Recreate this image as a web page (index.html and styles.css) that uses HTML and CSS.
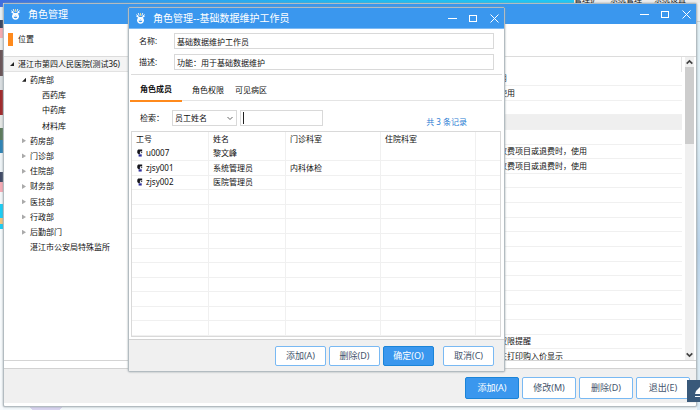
FILE: index.html
```
<!DOCTYPE html>
<html lang="zh-CN">
<head>
    <meta charset="UTF-8">
    <meta name="viewport" content="width=device-width, initial-scale=1.0">
    <title>角色管理</title>
    <link rel="stylesheet" href="styles.css">
</head>
<body>

    <svg class="defs" width="0" height="0" aria-hidden="true">
        <symbol id="logo" viewBox="0 0 20 26">
            <path d="M5 9L1 5M7 8L5 2M13 8L15 2M15 9L19 5" stroke="#fff" stroke-width="2"/>
            <path d="M10 8V2" stroke="#ffe27a" stroke-width="2"/>
            <path d="M1 8L17 19M19 8L3 19" stroke="#fff" stroke-width="3"/>
            <circle cx="10" cy="18" r="6" fill="none" stroke="#fff" stroke-width="3"/>
            <path d="M6 18H14" stroke="#fff" stroke-width="2"/>
        </symbol>
        <symbol id="min" viewBox="0 0 9 9"><path d="M0 4.5H9" stroke="#fff"/></symbol>
        <symbol id="max" viewBox="0 0 9 9"><rect x=".5" y="1.5" width="7" height="6" fill="none" stroke="#fff"/></symbol>
        <symbol id="close" viewBox="0 0 9 9"><path d="M.5 .5L8.5 8.5M8.5 .5L.5 8.5" stroke="#fff"/></symbol>
        <symbol id="user" viewBox="0 0 14 18">
            <path d="M4 1H13V5L8 6V12H5L2 9V4Z" fill="#15151c"/>
            <path d="M8 6H12V12H8Z" fill="#dfe6ee"/>
            <path d="M5 12H12V17H5Z" fill="#30309c"/>
            <path d="M11 6H13V9H11Z" fill="#15151c"/>
        </symbol>
        <symbol id="up" viewBox="0 0 8 8"><path d="M1.5 5.5L4 3L6.5 5.5" fill="none" stroke="#444" stroke-width="1.5"/></symbol>
        <symbol id="down" viewBox="0 0 8 8"><path d="M1.5 2.5L4 5L6.5 2.5" fill="none" stroke="#444" stroke-width="1.5"/></symbol>
        <symbol id="drop" viewBox="0 0 8 8"><path d="M1.5 3L4 5.5L6.5 3" fill="none" stroke="#666" stroke-width="1"/></symbol>
    </svg>

    <div class="top-strip">
        <span>管理护</span><span>系统管理</span><span>系统设置</span>
    </div>

    <div class="window">
        <div class="title-bar">
            <svg class="logo"><use href="#logo"/></svg>
            <span class="title">角色管理</span>
            <button class="ctrl" aria-label="最小化"><svg><use href="#min"/></svg></button>
            <button class="ctrl" aria-label="最大化"><svg><use href="#max"/></svg></button>
            <button class="ctrl" aria-label="关闭"><svg><use href="#close"/></svg></button>
        </div>
        <div class="location">位置</div>

        <div class="main">
            <ul class="tree">
                <li class="open selected">湛江市第四人民医院(测试36)</li>
                <li class="level1 open">药库部</li>
                <li class="level2">西药库</li>
                <li class="level2">中药库</li>
                <li class="level2">材料库</li>
                <li class="level1 closed">药房部</li>
                <li class="level1 closed">门诊部</li>
                <li class="level1 closed">住院部</li>
                <li class="level1 closed">财务部</li>
                <li class="level1 closed">医技部</li>
                <li class="level1 closed">行政部</li>
                <li class="level1 closed">后勤部门</li>
                <li class="level1">湛江市公安局特殊监所</li>
            </ul>
            <div class="list">
                <table class="roles">
                    <tr class="head"><th></th><th></th></tr>
                    <tr><td></td><td>用</td></tr>
                    <tr><td></td><td>使用</td></tr>
                    <tr><td></td><td></td></tr>
                    <tr class="current"><td></td><td></td></tr>
                    <tr><td></td><td></td></tr>
                    <tr><td></td><td>收费项目或退费时，使用</td></tr>
                    <tr><td></td><td>收费项目或退费时，使用</td></tr>
                    <tr><td></td><td></td></tr>
                    <tr><td></td><td></td></tr>
                    <tr><td></td><td></td></tr>
                    <tr><td></td><td></td></tr>
                    <tr><td></td><td></td></tr>
                    <tr><td></td><td></td></tr>
                    <tr><td></td><td></td></tr>
                    <tr><td></td><td></td></tr>
                    <tr><td></td><td></td></tr>
                    <tr><td></td><td></td></tr>
                    <tr><td></td><td></td></tr>
                    <tr><td></td><td>权限提醒</td></tr>
                    <tr><td></td><td>在打印购入价显示</td></tr>
                </table>
            </div>
            <div class="scrollbar">
                <svg><use href="#up"/></svg>
                <div class="thumb"></div>
                <svg><use href="#down"/></svg>
            </div>
        </div>

        <div class="footer">
            <button class="btn primary">添加(A)</button>
            <button class="btn">修改(M)</button>
            <button class="btn">删除(D)</button>
            <button class="btn">退出(E)</button>
        </div>
    </div>

    <div class="dialog" role="dialog" aria-label="角色管理--基础数据维护工作员">
        <div class="title-bar">
            <svg class="logo"><use href="#logo"/></svg>
            <span class="title">角色管理--基础数据维护工作员</span>
            <button class="ctrl" aria-label="最小化"><svg><use href="#min"/></svg></button>
            <button class="ctrl" aria-label="最大化"><svg><use href="#max"/></svg></button>
            <button class="ctrl" aria-label="关闭"><svg><use href="#close"/></svg></button>
        </div>

        <div class="form">
            <label for="name">名称:</label>
            <input type="text" id="name" value="基础数据维护工作员">
            <label for="desc">描述:</label>
            <input type="text" id="desc" value="功能：用于基础数据维护">
        </div>

        <div class="tabs">
            <button class="tab active">角色成员</button>
            <button class="tab">角色权限</button>
            <button class="tab">可见病区</button>
        </div>

        <div class="search">
            <label for="field">检索：</label>
            <div class="field">
                <select id="field"><option>员工姓名</option></select>
                <svg><use href="#drop"/></svg>
            </div>
            <div class="keyword"><input type="text" id="keyword" aria-label="关键字"></div>
            <span class="count">共 3 条记录</span>
        </div>

        <div class="members-box">
            <table class="members">
                <tr class="head"><th>工号</th><th>姓名</th><th>门诊科室</th><th>住院科室</th><th></th></tr>
                <tr><td><svg><use href="#user"/></svg>u0007</td><td>黎文峰</td><td></td><td></td><td></td></tr>
                <tr><td><svg><use href="#user"/></svg>zjsy001</td><td>系统管理员</td><td>内科体检</td><td></td><td></td></tr>
                <tr><td><svg><use href="#user"/></svg>zjsy002</td><td>医院管理员</td><td></td><td></td><td></td></tr>
                <tr><td></td><td></td><td></td><td></td><td></td></tr>
                <tr><td></td><td></td><td></td><td></td><td></td></tr>
                <tr><td></td><td></td><td></td><td></td><td></td></tr>
                <tr><td></td><td></td><td></td><td></td><td></td></tr>
                <tr><td></td><td></td><td></td><td></td><td></td></tr>
                <tr><td></td><td></td><td></td><td></td><td></td></tr>
                <tr><td></td><td></td><td></td><td></td><td></td></tr>
                <tr><td></td><td></td><td></td><td></td><td></td></tr>
                <tr><td></td><td></td><td></td><td></td><td></td></tr>
                <tr><td></td><td></td><td></td><td></td><td></td></tr>
            </table>
        </div>

        <div class="footer">
            <button class="btn">添加(A)</button>
            <button class="btn">删除(D)</button>
            <button class="btn primary">确定(O)</button>
            <button class="btn cancel">取消(C)</button>
        </div>
    </div>

    <button class="edit-badge" aria-label="编辑">
        <svg viewBox="0 0 13 22"><path d="M8 14L9 11L13 7V14Z" fill="#fff"/><path d="M8 16.500H13" stroke="#fff"/></svg>
    </button>

</body>
</html>
```
FILE: styles.css
```
* {
    box-sizing: border-box;
}
body {
    margin: 0;
    font-family: "Noto Sans", "Noto Sans CJK SC", sans-serif;
    font-size: 8px;
    line-height: 12px;
    color: #111;
    min-height: 100vh;
    /* desktop showing around the windows */
    background:
        radial-gradient(16px 5px at 46px 407px, #d9d4f0 98%, transparent) no-repeat,
        linear-gradient(#3f6fe0 0 7px, #e6eef2 7px 20px, #3c4660 20px 28px, #f4a9ae 28px 38px, #e8eaea 38px 50px, #6a5558 50px 76px, #d9dde0 76px 90px, #a02a2c 90px 115px, #e4e6e4 115px 128px, #5c7a5c 128px 140px, #2f83b5 140px 153px, #eef3f6 153px 172px, #404a66 172px 182px, #f6a9b4 182px 192px, #f4f6f8 192px 204px, #19cdf5 204px 218px, #f2c27c 218px 224px, #19cdf5 224px 229px, #f7fafc 229px) 0 0 / 3px 100% no-repeat,
        linear-gradient(#eef2f4 0 21px, #c8d0d4 21px 22px, #e2f0f6 22px 120px, #b9d3ea 250px, #dcebf5 350px) 100% 0 / 3px 100% no-repeat,
        #f3f8fb;
}
button, input, select {
    font: inherit;
    color: inherit;
    margin: 0;
}
.defs {
    position: absolute;
}

.top-strip {
    height: 3px;
    overflow: hidden;
    display: flex;
    justify-content: flex-end;
    align-items: flex-end;
    gap: 12px;
    padding-right: 14px;
    font-size: 8px;
    line-height: 8px;
    background: linear-gradient(90deg, #3f6fe0, #2f9df0 20%, #1fb9f2 50%, #1fc8f5 82%, #ececec 82%);
}

/* windows */
.window, .dialog {
    background: #fff;
    border: 1px solid #b3bcc1;
    border-radius: 2px;
    box-shadow: 0 0 2px #8d979d;
}
.window {
    margin: 0 3px;
}
.title-bar {
    display: flex;
    align-items: center;
    gap: 12px;
    height: 20px;
    padding: 0 5px 0 7px;
    background: #3a97ee;
    color: #fff;
    font-size: 10px;
}
.logo {
    width: 9px;
    height: 12px;
    flex: none;
}
.title {
    flex: 1;
    margin-left: -4px;
}
.ctrl {
    width: 9px;
    height: 9px;
    padding: 0;
    border: 0;
    background: none;
}
.ctrl svg {
    display: block;
    width: 9px;
    height: 9px;
}

.location {
    margin: 9px 4px 10px;
    padding-left: 5px;
    border-left: 5px solid #ff8a1c;
    height: 13px;
    line-height: 12px;
}

.main {
    display: flex;
    height: 305px;
    margin-bottom: 7px;
    border-top: 1px solid #dcdcdc;
    border-bottom: 1px solid #d4d4d4;
}

/* department tree */
.tree {
    width: 124px;
    height: 198px;
    margin: 0;
    padding: 0;
    list-style: none;
    display: grid;
    grid-auto-rows: 1fr;
}
.tree li {
    display: flex;
    align-items: center;
    padding-left: 6px;
    white-space: nowrap;
}
.tree li::before {
    content: "";
    width: 4px;
    height: 5px;
    margin-right: 4px;
    flex: none;
}
.tree .level1 {
    padding-left: 18px;
}
.tree .level2 {
    padding-left: 30px;
}
.tree .open::before {
    height: 4px;
    background: #222;
    clip-path: polygon(100% 0, 100% 100%, 0 100%);
}
.tree .closed::before {
    background: #aaa;
    clip-path: polygon(0 0, 100% 50%, 0 100%);
}
.tree .selected {
    background: #f4f4f4;
    border-bottom: 1px solid #e2e2e2;
}

/* tables */
table {
    border-collapse: separate;
    border-spacing: 0;
    table-layout: fixed;
    width: 100%;
}
th, td {
    height: 14px;
    padding: 0;
    text-align: left;
    font-weight: normal;
    white-space: nowrap;
    line-height: 12px;
    border-bottom: 1px solid #f0f0f0;
}
.head th {
    border-bottom: 0;
}
.list {
    flex: 1;
    overflow: hidden;
}
.roles {
    height: 307px;
}
.roles th:first-child {
    width: 371px;
}
.roles .head th:last-child {
    border-right: 1px solid #e4e4e4;
}
.roles .current td {
    background: #efefef;
}
.scrollbar {
    display: flex;
    flex-direction: column;
    width: 9px;
    margin: 0 2px 0 3px;
    background: #f0f0f0;
}
.scrollbar svg {
    width: 9px;
    height: 10px;
}
.thumb {
    height: 77px;
    margin-bottom: auto;
    background: #cdcdcd;
}

/* button bars */
.footer {
    display: flex;
    justify-content: flex-end;
    align-items: center;
    gap: 3px;
    height: 35px;
    margin-bottom: 3px;
    padding: 4px 6px 0 0;
    border-top: 1px solid #d2d2d2;
    background: #f0f0f0;
}
.btn {
    width: 54px;
    height: 22px;
    padding: 0;
    border: 1px solid #79b9f3;
    border-radius: 2px;
    background: #fff;
    color: #44546c;
    font-size: 9px;
}
.btn.primary {
    background: #3a97ee;
    border-color: #1b84d8;
    color: #fff;
}

/* role dialog */
.dialog {
    position: absolute;
    top: 7px;
    left: 128px;
    right: 195px;
}
.dialog .title-bar {
    height: 21px;
    border-bottom: 1px solid #7dbaf4;
}
.form {
    display: grid;
    grid-template-columns: 35px 1fr;
    row-gap: 5px;
    align-items: center;
    margin: 0 2px;
    padding: 4px 8px 4px 8px;
    border-bottom: 1px solid #dcdcdc;
}
.form input, .search select, .keyword {
    height: 16px;
    padding: 0 2px;
    border: 1px solid #d9d9d9;
    border-radius: 0;
    background: #fff;
    outline: 0;
}
.tabs {
    display: flex;
    gap: 9px;
    height: 26px;
    margin: 0 2px 0 1px;
    border-bottom: 1px solid #e4e4e4;
}
.tab {
    height: 27px;
    padding: 2px 0 0;
    border: 0;
    background: none;
    font-size: 8px;
    width: 34px;
}
.tab.active {
    width: 52px;
    border-bottom: 2px solid #ff8a1c;
    font-weight: bold;
}
.search {
    display: flex;
    align-items: center;
    padding: 9px 37px 5px 11px;
    height: 30px;
}
.search label {
    width: 32px;
}
.field {
    display: grid;
    align-items: center;
    width: 65px;
    margin-right: 3px;
}
.field select, .field svg {
    grid-area: 1 / 1;
}
.search select {
    width: 65px;
    appearance: none;
}
.field svg {
    width: 8px;
    height: 8px;
    justify-self: end;
    margin-right: 3px;
    pointer-events: none;
}
.keyword {
    display: flex;
    align-items: center;
    width: 83px;
}
/* text caret */
.keyword::before {
    content: "";
    width: 1px;
    height: 12px;
    background: #222;
}
.keyword input {
    width: 76px;
    height: 12px;
    padding: 0;
    border: 0;
    outline: 0;
}
.count {
    margin-left: auto;
    padding-top: 8px;
    color: #2b7cd3;
}
.members-box {
    margin: 0 3px 2px 2px;
    border: 1px solid #d9d9d9;
}
.members {
    height: 204px;
}
.members th, .members td {
    padding-left: 4px;
    border-right: 1px solid #f0f0f0;
}
.members th:nth-child(1), .members th:nth-child(2) {
    width: 77px;
}
.members th:nth-child(3), .members th:nth-child(4) {
    width: 95px;
}
.members th:last-child, .members td:last-child {
    border-right: 0;
}
.members svg {
    width: 7px;
    height: 8px;
    margin: 0 3px 0 0;
    vertical-align: -1px;
}
.dialog .footer {
    height: 32px;
    margin: 0;
    padding: 0 10px 0 0;
}
.dialog .btn {
    width: 51px;
    height: 20px;
}
.dialog .cancel {
    margin-left: 6px;
}

.edit-badge {
    position: absolute;
    top: 380px;
    right: 0;
    width: 13px;
    height: 22px;
    padding: 0;
    border: 0;
    background: #39597a;
}
.edit-badge svg {
    display: block;
    width: 13px;
    height: 22px;
}
```
